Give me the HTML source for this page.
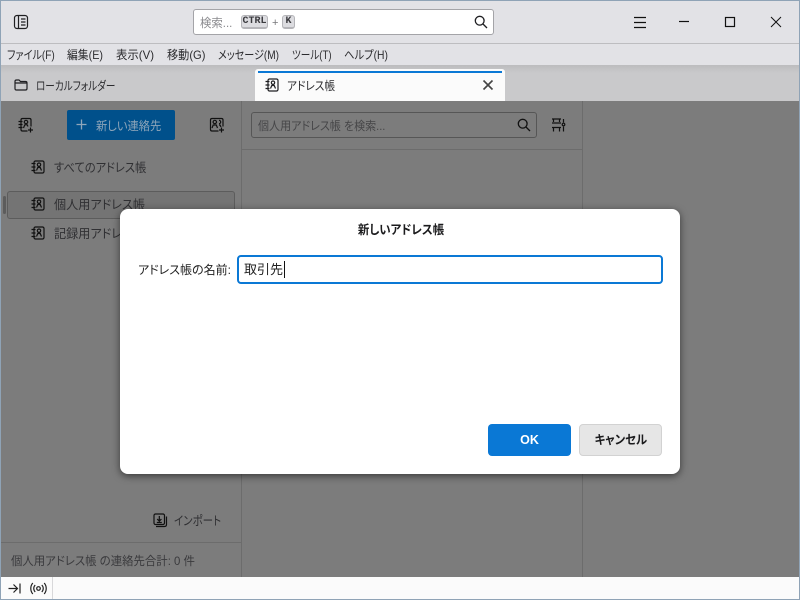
<!DOCTYPE html>
<html lang="ja"><head><meta charset="utf-8"><style>
html,body{margin:0;padding:0;width:800px;height:600px;overflow:hidden;background:#7c7c7c}
body{position:relative;font-family:"Liberation Sans","Noto Sans CJK JP",sans-serif;color:#1b1b1d;font-feature-settings:"palt"}
.a{position:absolute;white-space:nowrap}
.t{position:absolute;white-space:nowrap;line-height:16px;height:16px;transform-origin:0 50%}
svg{position:absolute;fill:none;stroke:#1f1f22;stroke-width:1.2}
.d{color:#303033}
.m{color:#2b2b2e}
</style></head><body>
<div class="a" style="left:0;top:0;width:800px;height:44px;background:#e2e2e6;border-top:1px solid #8fa3b6;box-sizing:border-box;border-bottom:1px solid #bdbdc0"></div>
<div class="a" style="left:0;top:44px;width:800px;height:21px;background:#e2e2e6"></div>
<div class="a" style="left:0;top:65px;width:800px;height:36px;background:linear-gradient(#bcbcbe,#c9c9cb 8px,#c9c9cb)"></div>
<div class="a" style="left:0;top:0;width:1px;height:600px;background:#8fa3b6"></div>
<div class="a" style="left:799px;top:0;width:1px;height:600px;background:#8fa3b6"></div>
<svg style="left:13px;top:14px" width="16" height="16" viewBox="0 0 16 16"><rect x="1.5" y="1.5" width="13" height="13" rx="2.5"/><path d="M5.5 2V14M8 5H12.5M8 8H12.5M8 11H12.5"/></svg>
<div class="a" style="left:193px;top:9px;width:301px;height:26px;box-sizing:border-box;background:#fff;border:1px solid #a4a4a8;border-radius:3px"></div>
<div class="t" style="left:200px;top:15px;font-size:12px;color:#8a8a8e;transform:scaleX(.95)">検索...</div>
<div class="a" style="left:241px;top:15px;width:27px;height:14px;background:#dcdce0;border:1px solid #b5b5b9;border-bottom-width:2px;box-sizing:border-box;border-radius:3px;font:bold 10px/11px 'Liberation Mono',monospace;text-align:center;color:#3a3a3e">CTRL</div>
<div class="t" style="left:272px;top:15px;font-size:11px;color:#77777b">+</div>
<div class="a" style="left:282px;top:15px;width:13px;height:14px;background:#dcdce0;border:1px solid #b5b5b9;border-bottom-width:2px;box-sizing:border-box;border-radius:3px;font:bold 10px/11px 'Liberation Mono',monospace;text-align:center;color:#3a3a3e">K</div>
<svg style="left:474px;top:15px;stroke-width:1.3" width="14" height="14" viewBox="0 0 14 14"><circle cx="5.7" cy="5.7" r="4.4"/><path d="M9 9L13 13"/></svg>
<svg style="left:633px;top:15px;stroke:#111" width="14" height="14" viewBox="0 0 14 14"><path d="M1 2.5H13M1 7.5H13M1 12.5H13"/></svg>
<svg style="left:678px;top:16px;stroke:#111" width="12" height="12" viewBox="0 0 12 12"><path d="M1 5.5H11"/></svg>
<svg style="left:724px;top:16px;stroke:#111" width="12" height="12" viewBox="0 0 12 12"><rect x="1.5" y="1.5" width="9" height="9"/></svg>
<svg style="left:770px;top:16px;stroke:#111;stroke-width:1" width="12" height="12" viewBox="0 0 12 12"><path d="M1 1L11 11M11 1L1 11"/></svg>
<div class="t m" style="left:7px;top:47px;font-size:12px;transform:scaleX(.84)">ファイル(F)</div>
<div class="t m" style="left:67px;top:47px;font-size:12px;transform:scaleX(.9)">編集(E)</div>
<div class="t m" style="left:116px;top:47px;font-size:12px;transform:scaleX(.95)">表示(V)</div>
<div class="t m" style="left:167px;top:47px;font-size:12px;transform:scaleX(.93)">移動(G)</div>
<div class="t m" style="left:218px;top:47px;font-size:12px;transform:scaleX(.84)">メッセージ(M)</div>
<div class="t m" style="left:292px;top:47px;font-size:12px;transform:scaleX(.8)">ツール(T)</div>
<div class="t m" style="left:344px;top:47px;font-size:12px;transform:scaleX(.86)">ヘルプ(H)</div>
<svg style="left:14px;top:78px" width="14" height="14" viewBox="0 0 14 14"><path d="M1 3.5Q1 2 2.5 2H5L6.5 3.5H11.500Q13 3.5 13 5V10.500Q13 12 11.500 12H2.500Q1 12 1 10.500ZM1 5H13"/></svg>
<div class="t m" style="left:36px;top:78px;font-size:12px;transform:scaleX(.8)">ローカルフォルダー</div>
<div class="a" style="left:255px;top:69px;width:250px;height:32px;background:#fbfbfb;border-radius:3px 3px 0 0"></div>
<div class="a" style="left:258px;top:71px;width:244px;height:2px;background:#0a78d5"></div>
<svg style="left:265px;top:78px" width="14" height="14" viewBox="0 0 14 14"><rect x="3" y="1" width="10" height="12" rx="1.500"/><path d="M0.500 3.500H4.500M0.500 7H4.500M0.500 10.500H4.500M5.500 10.500L6.800 7.500H9.200L10.500 10.500M8 3A1.700 1.700 0 1 0 8.010 3"/></svg>
<div class="t m" style="left:287px;top:78px;font-size:12px;transform:scaleX(.89)">アドレス帳</div>
<svg style="left:482px;top:79px;stroke:#444;stroke-width:1.6" width="12" height="12" viewBox="0 0 12 12"><path d="M1.500 1.500L10.500 10.500M10.500 1.500L1.500 10.500"/></svg>
<div class="a" style="left:1px;top:101px;width:798px;height:476px;background:#7c7c7c"></div>
<div class="a" style="left:241px;top:101px;width:1px;height:476px;background:#6c6c6c"></div>
<div class="a" style="left:582px;top:101px;width:1px;height:476px;background:#6c6c6c"></div>
<div class="a" style="left:242px;top:149px;width:340px;height:1px;background:#6c6c6c"></div>
<div class="a" style="left:1px;top:542px;width:240px;height:1px;background:#6c6c6c"></div>
<svg style="left:18px;top:117px;stroke:#111" width="16" height="16" viewBox="0 0 16 16"><path d="M9.500 14H4.500Q3 14 3 12.500V3Q3 1.500 4.500 1.500H11.500Q13 1.500 13 3V9.500M0.500 4.500H4.500M0.500 7.500H4.500M0.500 10.500H4.500M5.500 11L6.800 7.800H9.200L10 9.500M8 3.300A1.700 1.700 0 1 0 8.010 3.300M12.500 10.500V15.500M10 13H15"/></svg>
<div class="a" style="left:67px;top:110px;width:108px;height:30px;background:#00508b;border-radius:2px"></div>
<svg style="left:76px;top:119px;stroke:#8fa6ba;stroke-width:1.300" width="11" height="11" viewBox="0 0 11 11"><path d="M5.500 0.500V10.500M0.500 5.500H10.500"/></svg>
<div class="t" style="left:96px;top:118px;font-size:12px;color:#8fa6ba;transform:scaleX(.94)">新しい連絡先</div>
<svg style="left:209px;top:117px;stroke:#111" width="16" height="16" viewBox="0 0 16 16"><path d="M9.500 14H3Q1.500 14 1.500 12.500V3Q1.500 1.500 3 1.500H12.500Q14 1.500 14 3V9.500M3 11L4.200 8H7.300L8.500 11M5.800 3.300A1.700 1.700 0 1 0 5.810 3.300M10 3.300A1.700 1.700 0 0 1 10 6.700M10 8H11L12 10M12.500 10.500V15.500M10 13H15"/></svg>
<svg style="left:31px;top:160px;stroke:#111" width="14" height="14" viewBox="0 0 14 14"><rect x="3" y="1" width="10" height="12" rx="1.500"/><path d="M0.500 3.500H4.500M0.500 7H4.500M0.500 10.500H4.500M5.500 10.500L6.800 7.500H9.200L10.500 10.500M8 3A1.700 1.700 0 1 0 8.010 3"/></svg>
<div class="t d" style="left:54px;top:160px;font-size:12.500px;transform:scaleX(.9)">すべてのアドレス帳</div>
<div class="a" style="left:7px;top:191px;width:228px;height:28px;box-sizing:border-box;border:1px solid #5c5c5c;border-radius:3px;background:#747474"></div>
<div class="a" style="left:3px;top:196px;width:3px;height:18px;background:#5c5c5c;border-radius:2px"></div>
<svg style="left:31px;top:197px;stroke:#111" width="14" height="14" viewBox="0 0 14 14"><rect x="3" y="1" width="10" height="12" rx="1.500"/><path d="M0.500 3.500H4.500M0.500 7H4.500M0.500 10.500H4.500M5.500 10.500L6.800 7.500H9.200L10.500 10.500M8 3A1.700 1.700 0 1 0 8.010 3"/></svg>
<div class="t d" style="left:54px;top:197px;font-size:12.500px;transform:scaleX(.97)">個人用アドレス帳</div>
<svg style="left:31px;top:226px;stroke:#111" width="14" height="14" viewBox="0 0 14 14"><rect x="3" y="1" width="10" height="12" rx="1.500"/><path d="M0.500 3.500H4.500M0.500 7H4.500M0.500 10.500H4.500M5.500 10.500L6.800 7.500H9.200L10.500 10.500M8 3A1.700 1.700 0 1 0 8.010 3"/></svg>
<div class="t d" style="left:54px;top:226px;font-size:12.500px;transform:scaleX(.97)">記録用アドレス帳</div>
<div class="a" style="left:251px;top:112px;width:286px;height:26px;box-sizing:border-box;border:1px solid #565656;border-radius:3px"></div>
<div class="t" style="left:258px;top:118px;font-size:12px;color:#464648;transform:scaleX(.92)">個人用アドレス帳 を検索...</div>
<svg style="left:517px;top:118px;stroke:#111;stroke-width:1.300" width="14" height="14" viewBox="0 0 14 14"><circle cx="5.700" cy="5.700" r="4.400"/><path d="M9 9L13 13"/></svg>
<svg style="left:551px;top:118px;stroke:#111" width="15" height="15" viewBox="0 0 15 15"><path d="M1 1H10M2.500 1V4M8.500 1V4M1 5H10M1 9.500H10M2.500 9.500V13.500M8.500 9.500V13.500M12.500 1V4.500M12.500 8.500V13.500"/><circle cx="12.500" cy="6.500" r="1.300"/></svg>
<svg style="left:153px;top:513px;stroke:#111" width="15" height="15" viewBox="0 0 15 15"><rect x="1" y="1" width="10.500" height="10.500" rx="1.500"/><path d="M6.300 3V8M4.200 6L6.300 8.200L8.400 6M3.800 9.500H8.800M3 13.500H11.500Q13.500 13.500 13.500 11.500V3.500"/></svg>
<div class="t d" style="left:174px;top:513px;font-size:12.500px;transform:scaleX(.84)">インポート</div>
<div class="t" style="left:11px;top:553px;font-size:12px;color:#3a3a3d;transform:scaleX(.95)">個人用アドレス帳 の連絡先合計: 0 件</div>
<div class="a" style="left:1px;top:577px;width:798px;height:22px;background:#fbfbfb"></div>
<div class="a" style="left:0;top:599px;width:800px;height:1px;background:#8fa3b6"></div>
<div class="a" style="left:52px;top:577px;width:1px;height:22px;background:#d8d8da"></div>
<svg style="left:8px;top:582px;stroke:#222" width="13" height="13" viewBox="0 0 13 13"><path d="M0.500 6.500H9M5.500 2.500L9.500 6.500L5.500 10.500M12 1.500V11.500"/></svg>
<svg style="left:30px;top:582px;stroke:#222" width="17" height="13" viewBox="0 0 17 13"><circle cx="8.500" cy="6.500" r="1.800"/><path d="M5.200 3A5 5 0 0 0 5.200 10M11.800 3A5 5 0 0 1 11.800 10M2.800 1A8.500 8.500 0 0 0 2.800 12M14.200 1A8.500 8.500 0 0 1 14.200 12"/></svg>
<div class="a" style="left:120px;top:209px;width:560px;height:265px;background:#fff;border-radius:8px;box-shadow:0 2px 8px rgba(0,0,0,.55)"></div>
<div class="t" style="left:121px;top:222px;width:560px;text-align:center;font-size:12.500px;font-weight:bold;color:#1b1b1d;transform:scaleX(.915);transform-origin:50% 50%">新しいアドレス帳</div>
<div class="t" style="left:138px;top:262px;font-size:12px;color:#222">アドレス帳の名前:</div>
<div class="a" style="left:237px;top:255px;width:426px;height:29px;box-sizing:border-box;border:2px solid #0a78d5;border-radius:4px;background:#fff"></div>
<div class="t" style="left:244px;top:262px;font-size:13px;color:#222">取引先</div>
<div class="a" style="left:284px;top:261px;width:1px;height:17px;background:#111"></div>
<div class="a" style="left:488px;top:424px;width:83px;height:32px;background:#0a78d5;border-radius:4px;color:#fff;font-size:12.500px;font-weight:bold;line-height:33px;text-align:center">OK</div>
<div class="a" style="left:579px;top:424px;width:83px;height:32px;box-sizing:border-box;background:#e6e6e6;border:1px solid #d2d2d2;border-radius:4px;color:#1b1b1d;font-size:12.500px;font-weight:bold;line-height:31px;text-align:center"><span style="display:inline-block;transform:scaleX(.91)">キャンセル</span></div>
</body></html>
